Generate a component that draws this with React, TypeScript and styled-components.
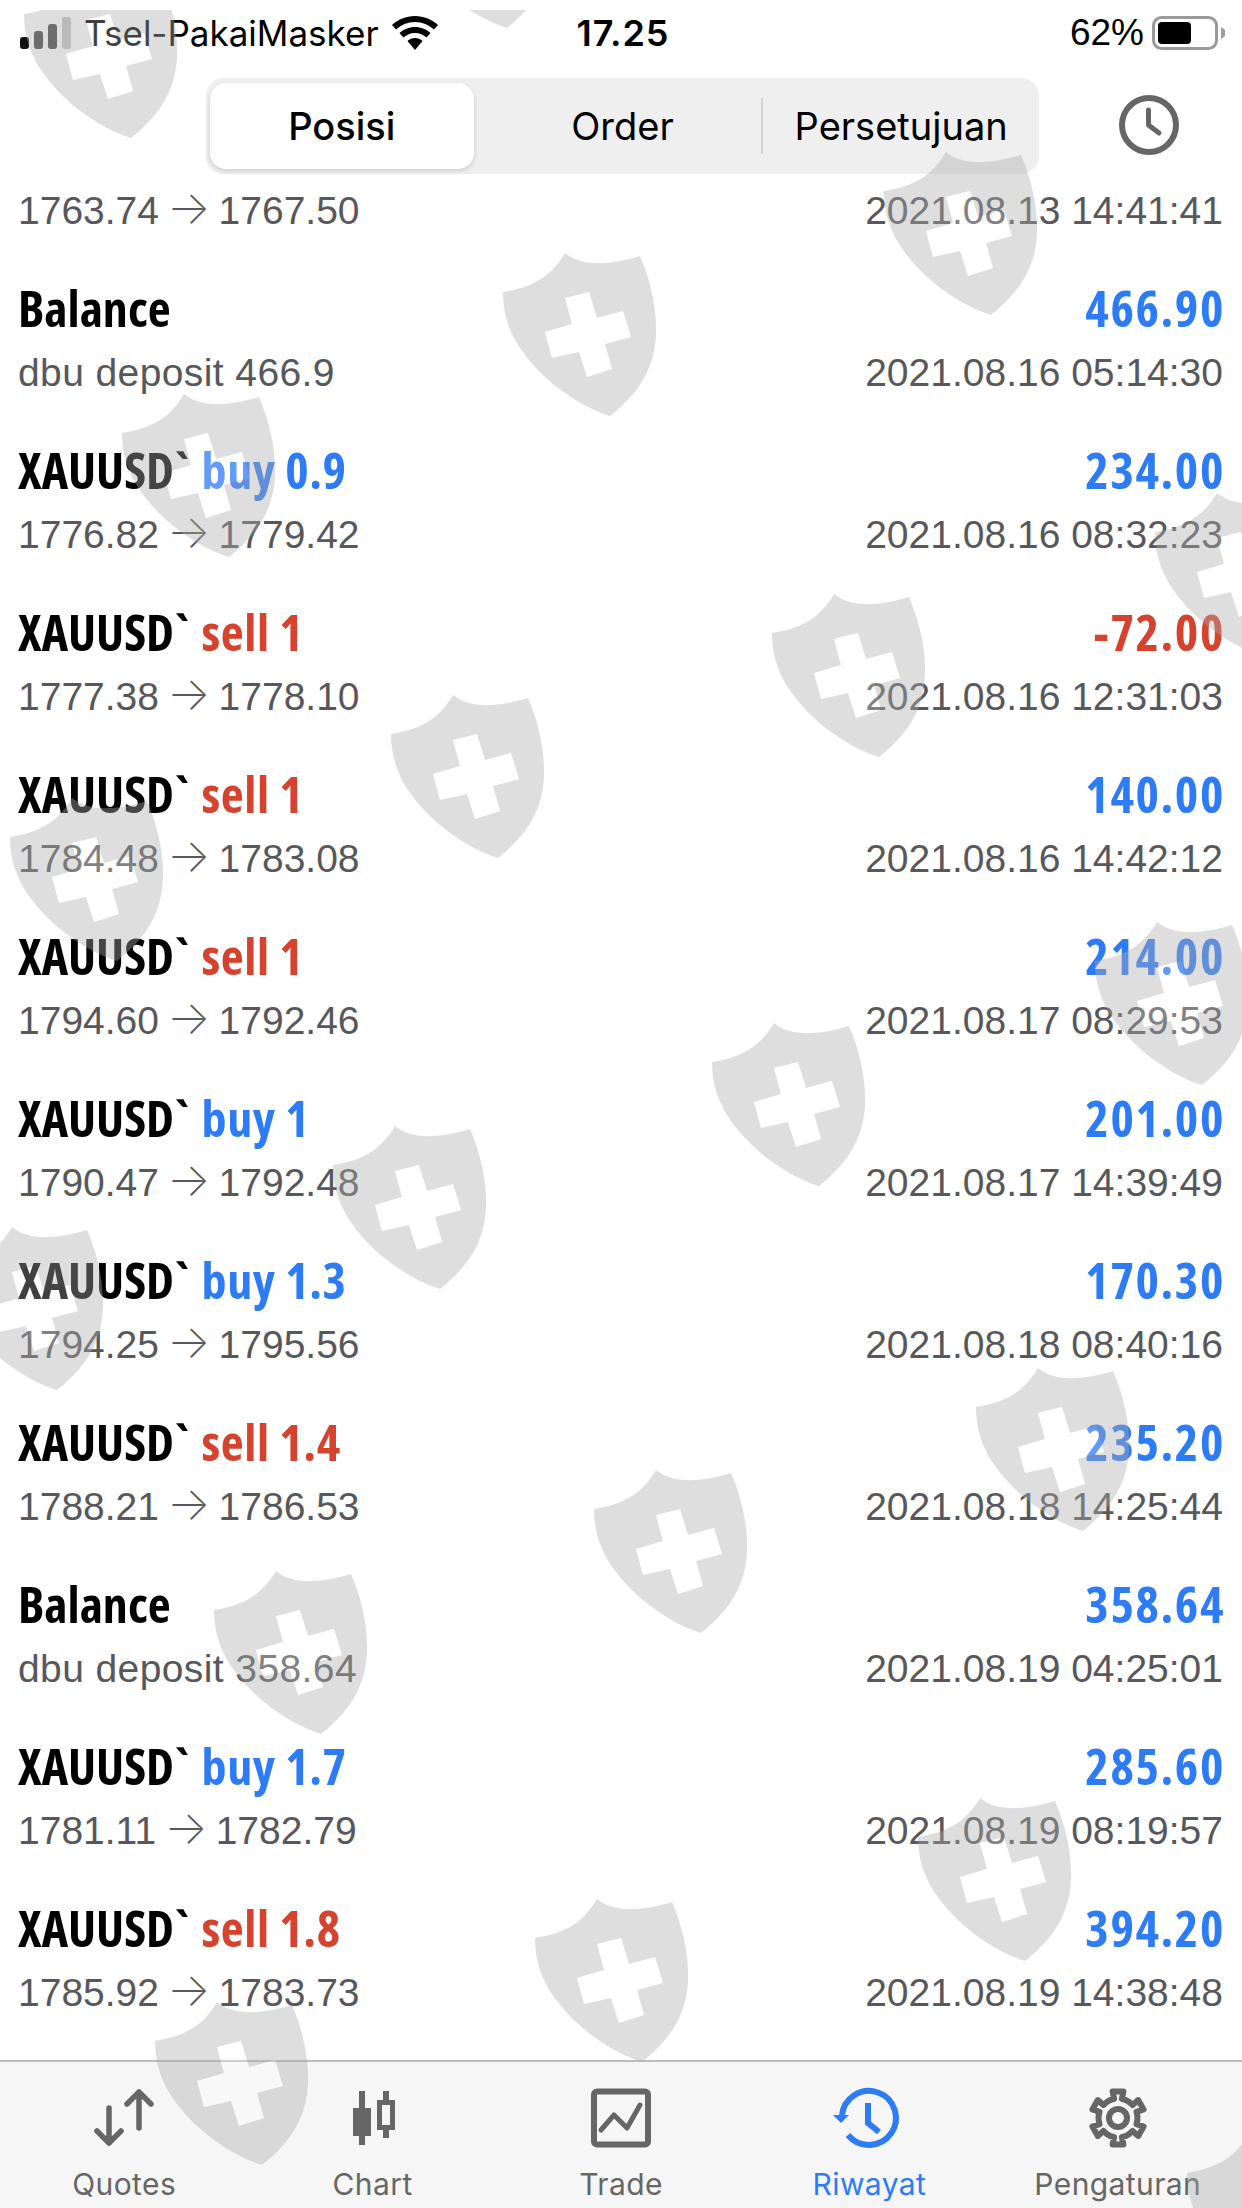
import React from 'react';
import styled, { createGlobalStyle } from 'styled-components';

const BLUE = '#2e7bf6';
const RED = '#d5432f';
const ICON_GREY = '#666666';

const GlobalStyle = createGlobalStyle`
  html, body {
    margin: 0;
    padding: 0;
    background: #ffffff;
  }
  * {
    box-sizing: border-box;
  }
`;

const Screen = styled.div`
  position: relative;
  width: 1242px;
  height: 2208px;
  overflow: hidden;
  display: flex;
  flex-direction: column;
  background: #ffffff;
  font-family: 'Liberation Sans', Arial, sans-serif;
`;

const StatusBar = styled.div`
  height: 66px;
  padding: 0 16px 0 20px;
  display: grid;
  grid-template-columns: 1fr auto 1fr;
  align-items: center;
  color: #000000;
`;

const StatusLeft = styled.div`
  display: flex;
  align-items: center;
`;

const Carrier = styled.span`
  font-family: Inter, 'Liberation Sans', sans-serif;
  font-size: 35px;
  margin: 0 13px 0 12px;
`;

const Clock = styled.span`
  font-family: Inter, 'Liberation Sans', sans-serif;
  font-size: 36px;
  font-weight: 600;
  letter-spacing: 1px;
`;

const StatusRight = styled.div`
  display: flex;
  align-items: center;
  justify-content: flex-end;
  font-size: 37px;
  gap: 8px;
`;

const Toolbar = styled.div`
  height: 120px;
  padding: 12px 0 0 206px;
  display: flex;
  align-items: flex-start;
`;

const Segmented = styled.div`
  width: 833px;
  height: 96px;
  border-radius: 18px;
  background: #efefef;
  display: grid;
  grid-template-columns: repeat(3, 1fr);
  align-items: center;
  position: relative;
`;

const Segment = styled.div<{ $active?: boolean; $divided?: boolean }>`
  height: ${(p) => (p.$active ? '86px' : '56px')};
  margin: ${(p) => (p.$active ? '0 10px 0 4px' : '0')};
  display: flex;
  align-items: center;
  justify-content: center;
  font-family: Inter, 'Liberation Sans', sans-serif;
  font-size: 38px;
  font-weight: ${(p) => (p.$active ? 500 : 400)};
  color: #000000;
  background: ${(p) => (p.$active ? '#ffffff' : 'transparent')};
  border-radius: ${(p) => (p.$active ? '16px' : '0')};
  box-shadow: ${(p) => (p.$active ? '0 2px 5px rgba(0, 0, 0, 0.14)' : 'none')};
  border-left: ${(p) => (p.$divided ? '2px solid #d4d4d4' : 'none')};
`;

const HistoryButton = styled.div`
  margin: 17px 0 0 80px;
  width: 60px;
  height: 60px;
`;

const List = styled.div`
  flex: 1;
  overflow: hidden;
`;

const Row = styled.div<{ $partial?: boolean }>`
  height: ${(p) => (p.$partial ? '57px' : '162px')};
  padding: ${(p) => (p.$partial ? '0' : '33px')} 19px 0 18px;
`;

const RowLine = styled.div`
  display: flex;
  justify-content: space-between;
  align-items: center;
`;

const Title = styled(RowLine)`
  height: 64px;
  margin-bottom: 3px;
  font-family: 'Open Sans', 'Liberation Sans', sans-serif;
  font-size: 50px;
  font-stretch: 75%;
  font-weight: 700;
  color: #000000;
`;

const Side = styled.span<{ $tone: string }>`
  color: ${(p) => p.$tone};
  margin-left: 12px;
  letter-spacing: 0.6px;
`;

const Amount = styled.span<{ $tone: string }>`
  color: ${(p) => p.$tone};
  letter-spacing: 1.6px;
  margin-right: -2px;
`;

const Sub = styled(RowLine)<{ $short?: boolean }>`
  height: ${(p) => (p.$short ? '50px' : '60px')};
  font-size: 39px;
  color: #58585c;
`;

const Note = styled.span`
  letter-spacing: 0.4px;
`;

const Arrow = styled.span`
  font-family: Inter, 'Liberation Sans', sans-serif;
  font-size: 46px;
  font-weight: 200;
  line-height: 30px;
  margin: 0 -3px;
`;

const TabBar = styled.div`
  height: 148px;
  border-top: 2px solid #bdbdbd;
  background: #f6f6f6;
  display: grid;
  grid-template-columns: repeat(5, 1fr);
  padding-top: 26px;
`;

const Tab = styled.div<{ $active?: boolean }>`
  display: flex;
  flex-direction: column;
  align-items: center;
  color: ${(p) => (p.$active ? BLUE : ICON_GREY)};
`;

const TabLabel = styled.span`
  margin-top: 18px;
  font-family: Inter, 'Liberation Sans', sans-serif;
  font-size: 30px;
  line-height: 36px;
  letter-spacing: 0.4px;
`;

// the watermark layer lies over the whole screen, except its top 10px
const WatermarkLayer = styled.div`
  position: absolute;
  inset: 10px 0 0 0;
  overflow: hidden;
  pointer-events: none;
`;

const Watermark = styled.svg.attrs({ viewBox: '0 0 180 190', width: 180, height: 190 })<{
  $x: number;
  $y: number;
}>`
  position: absolute;
  left: ${(p) => p.$x}px;
  top: ${(p) => p.$y}px;
`;

const CROSS = 'M75 58L99 52L107 78L133 71L141 97L115 104L122 129L97 137L89 112L62 118L55 92L82 84Z';
const SHIELD =
  'M75 13C90 25 113 27 150 16C165 50 172 95 160 125C152 147 136 163 120 176C85 165 45 135 25 100C17 85 13 70 13 52C45 47 62 35 75 13Z';

// bounding-box corners of the shields, in screenshot pixels
const WATERMARKS: Array<[number, number]> = [
  [24, -25], [400, -135], [503, 253], [884, 152], [122, 394], [1155, 493], [772, 594],
  [391, 695], [10, 798], [1095, 922], [712, 1023], [333, 1126], [-50, 1227], [976, 1368],
  [594, 1470], [214, 1571], [918, 1798], [535, 1899], [155, 2002], [1187, 2134],
];

const ShieldMark: React.FC<{ x: number; y: number }> = ({ x, y }) => (
  <Watermark $x={x - 13} $y={y - 23}>
    <path d={SHIELD + CROSS} fillRule="evenodd" fill="rgb(172,172,172)" fillOpacity={0.4} />
    <path d={CROSS} fill="#ffffff" fillOpacity={0.25} />
  </Watermark>
);

const Icon: React.FC<{ children: React.ReactNode }> = ({ children }) => (
  <svg width="60" height="60" viewBox="0 0 60 60" fill="none" stroke="currentColor" style={{ overflow: 'visible' }}>
    {children}
  </svg>
);

const gearPoints = (): string => {
  const pts: string[] = [];
  for (let k = 0; k < 6; k++) {
    const a = ((k * 60 - 90) * Math.PI) / 180;
    [[-0.42, 19.5], [-0.2, 19.5], [-0.2, 27], [0.2, 27], [0.2, 19.5], [0.42, 19.5]].forEach(([d, r]) => {
      pts.push(`${(30 + r * Math.cos(a + d)).toFixed(1)},${(30 + r * Math.sin(a + d)).toFixed(1)}`);
    });
  }
  return pts.join(' ');
};

const SignalBars = () => (
  <svg width="52" height="32" viewBox="0 0 52 32">
    <rect x="0" y="20" width="9" height="12" rx="3" fill="#111" />
    <rect x="14" y="14" width="9" height="18" rx="3" fill="#444" />
    <rect x="28" y="7" width="9" height="25" rx="3" fill="#444" />
    <rect x="42" y="0" width="9" height="32" rx="3" fill="#c4c4c4" />
  </svg>
);

const Wifi = () => (
  <svg width="46" height="34" viewBox="0 0 46 34" fill="#000">
    <path d="M23 0C14 0 6 3.500 0 9L4 13.500C9 9 15.500 6 23 6S37 9 42 13.500L46 9C40 3.500 32 0 23 0Z" />
    <path d="M23 11C17 11 11.500 13.500 7.500 17L11.500 21.500C14.500 19 18.500 17 23 17S31.500 19 34.500 21.500L38.500 17C34.500 13.500 29 11 23 11Z" />
    <path d="M23 22C20 22 17.500 23 15.500 25L23 34L30.500 25C28.500 23 26 22 23 22Z" />
  </svg>
);

const Battery = () => (
  <svg width="74" height="34" viewBox="0 0 74 34">
    <rect x="1.500" y="1.500" width="63" height="31" rx="8" fill="none" stroke="#9a9a9a" strokeWidth="3" />
    <rect x="6" y="6" width="33" height="22" rx="4" fill="#000" />
    <path d="M69 11L73 14V20L69 23Z" fill="#9a9a9a" />
  </svg>
);

type Trade = {
  name: string;
  side?: string;
  sideTone?: string;
  amount: string;
  tone?: string;
  detail: React.ReactNode;
  time: string;
};

const prices = (open: string, close: string) => (
  <>
    {open} <Arrow>→</Arrow> {close}
  </>
);

const buy = (lots: string, amount: string, open: string, close: string, time: string): Trade => ({
  name: 'XAUUSD`',
  side: `buy ${lots}`,
  sideTone: BLUE,
  amount,
  detail: prices(open, close),
  time,
});

const sell = (lots: string, amount: string, open: string, close: string, time: string, tone?: string): Trade => ({
  name: 'XAUUSD`',
  side: `sell ${lots}`,
  sideTone: RED,
  amount,
  tone,
  detail: prices(open, close),
  time,
});

const TRADES: Trade[] = [
  { name: 'Balance', amount: '466.90', detail: <Note>dbu deposit 466.9</Note>, time: '2021.08.16 05:14:30' },
  buy('0.9', '234.00', '1776.82', '1779.42', '2021.08.16 08:32:23'),
  sell('1', '-72.00', '1777.38', '1778.10', '2021.08.16 12:31:03', RED),
  sell('1', '140.00', '1784.48', '1783.08', '2021.08.16 14:42:12'),
  sell('1', '214.00', '1794.60', '1792.46', '2021.08.17 08:29:53'),
  buy('1', '201.00', '1790.47', '1792.48', '2021.08.17 14:39:49'),
  buy('1.3', '170.30', '1794.25', '1795.56', '2021.08.18 08:40:16'),
  sell('1.4', '235.20', '1788.21', '1786.53', '2021.08.18 14:25:44'),
  { name: 'Balance', amount: '358.64', detail: <Note>dbu deposit 358.64</Note>, time: '2021.08.19 04:25:01' },
  buy('1.7', '285.60', '1781.11', '1782.79', '2021.08.19 08:19:57'),
  sell('1.8', '394.20', '1785.92', '1783.73', '2021.08.19 14:38:48'),
];

const App: React.FC = () => {
  return (
    <Screen>
      <GlobalStyle />
      <StatusBar>
        <StatusLeft>
          <SignalBars />
          <Carrier>Tsel-PakaiMasker</Carrier>
          <Wifi />
        </StatusLeft>
        <Clock>17.25</Clock>
        <StatusRight>
          62%
          <Battery />
        </StatusRight>
      </StatusBar>

      <Toolbar>
        <Segmented>
          <Segment $active>Posisi</Segment>
          <Segment>Order</Segment>
          <Segment $divided>Persetujuan</Segment>
        </Segmented>
        <HistoryButton>
          <Icon>
            <circle cx="30" cy="30" r="27" stroke={ICON_GREY} strokeWidth="6" />
            <path d="M29.500 15V30L40 38" stroke={ICON_GREY} strokeWidth="5" strokeLinecap="round" strokeLinejoin="round" />
          </Icon>
        </HistoryButton>
      </Toolbar>

      <List>
        <Row $partial>
          <Sub $short>
            <span>{prices('1763.74', '1767.50')}</span>
            <span>2021.08.13 14:41:41</span>
          </Sub>
        </Row>
        {TRADES.map((t) => (
          <Row key={t.time}>
            <Title>
              <span>
                {t.name}
                {t.side && <Side $tone={t.sideTone ?? BLUE}>{t.side}</Side>}
              </span>
              <Amount $tone={t.tone ?? BLUE}>{t.amount}</Amount>
            </Title>
            <Sub>
              <span>{t.detail}</span>
              <span>{t.time}</span>
            </Sub>
          </Row>
        ))}
      </List>

      <TabBar>
        <Tab>
          <Icon>
            <g strokeWidth="5.500" strokeLinecap="round" strokeLinejoin="round">
              <path d="M15 20V55M3 43L15 55L27 43" />
              <path d="M45 4V40M33 16L45 4L57 16" />
            </g>
          </Icon>
          <TabLabel>Quotes</TabLabel>
        </Tab>
        <Tab>
          <Icon>
            <path d="M19 3V57" strokeWidth="6" />
            <rect x="10" y="20" width="18" height="28" fill="currentColor" stroke="none" />
            <path d="M43 3V50" strokeWidth="6" />
            <rect x="36.500" y="14.500" width="13" height="25" fill="#f6f6f6" strokeWidth="5" />
          </Icon>
          <TabLabel>Chart</TabLabel>
        </Tab>
        <Tab>
          <Icon>
            <rect x="3" y="3.500" width="54" height="53" rx="3" strokeWidth="6" />
            <path d="M10 42L23 27L36 40L49 17" strokeWidth="5" strokeLinecap="round" strokeLinejoin="round" />
          </Icon>
          <TabLabel>Trade</TabLabel>
        </Tab>
        <Tab $active>
          <Icon>
            <path d="M3 28A27 27 0 1 1 9 47" strokeWidth="6" />
            <path d="M-6 27H10L2 35Z" fill="currentColor" stroke="none" />
            <path d="M29 15V35L40 44" strokeWidth="6" />
          </Icon>
          <TabLabel>Riwayat</TabLabel>
        </Tab>
        <Tab>
          <Icon>
            <polygon points={gearPoints()} strokeWidth="6" strokeLinejoin="round" />
            <circle cx="30" cy="30" r="9" strokeWidth="6" />
          </Icon>
          <TabLabel>Pengaturan</TabLabel>
        </Tab>
      </TabBar>

      <WatermarkLayer>
        {WATERMARKS.map(([x, y]) => (
          <ShieldMark key={`${x}-${y}`} x={x} y={y} />
        ))}
      </WatermarkLayer>
    </Screen>
  );
};

export default App;
